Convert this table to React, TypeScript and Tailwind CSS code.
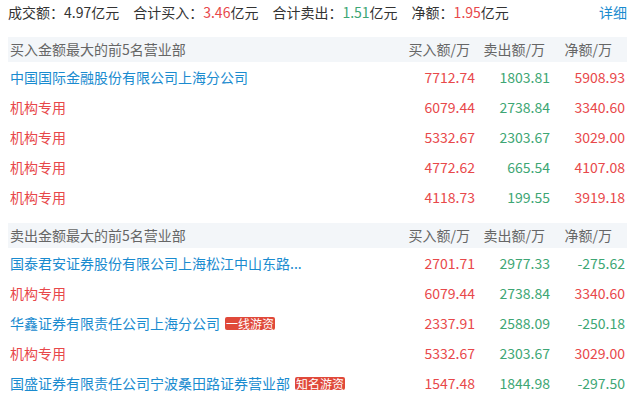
const RED = 'text-[#e8484a]'
const GREEN = 'text-[#3da674]'

interface Row {
  name: string
  inst?: boolean
  tag?: string
  buy: string
  sell: string
  net: string
}

const buyRows: Row[] = [
  { name: '中国国际金融股份有限公司上海分公司', buy: '7712.74', sell: '1803.81', net: '5908.93' },
  { name: '机构专用', inst: true, buy: '6079.44', sell: '2738.84', net: '3340.60' },
  { name: '机构专用', inst: true, buy: '5332.67', sell: '2303.67', net: '3029.00' },
  { name: '机构专用', inst: true, buy: '4772.62', sell: '665.54', net: '4107.08' },
  { name: '机构专用', inst: true, buy: '4118.73', sell: '199.55', net: '3919.18' },
]

const sellRows: Row[] = [
  { name: '国泰君安证券股份有限公司上海松江中山东路...', buy: '2701.71', sell: '2977.33', net: '-275.62' },
  { name: '机构专用', inst: true, buy: '6079.44', sell: '2738.84', net: '3340.60' },
  { name: '华鑫证券有限责任公司上海分公司', tag: '一线游资', buy: '2337.91', sell: '2588.09', net: '-250.18' },
  { name: '机构专用', inst: true, buy: '5332.67', sell: '2303.67', net: '3029.00' },
  { name: '国盛证券有限责任公司宁波桑田路证券营业部', tag: '知名游资', buy: '1547.48', sell: '1844.98', net: '-297.50' },
]

function Header({ title }: { title: string }) {
  return (
    <div className="flex h-[25px] items-center bg-[#f3f6f9] text-[#666] pr-[2px]">
      <div className="flex-1 pl-[2px]">{title}</div>
      <div className="w-[75px] text-right pr-[5px]">买入额/万</div>
      <div className="w-[75px] text-right pr-[5px]">卖出额/万</div>
      <div className="w-[75px] text-right pr-[13px]">净额/万</div>
    </div>
  )
}

function TableRow({ row }: { row: Row }) {
  const netColor = row.net.startsWith('-') ? GREEN : RED
  return (
    <div className="flex h-[30px] items-center pr-[2px]">
      <div className="flex flex-1 items-center pl-[2px] min-w-0">
        <span className={row.inst ? RED : 'text-[#1a8bcf]'}>{row.name}</span>
        {row.tag && (
          <span className="ml-[5px] h-[13px] rounded-[2px] bg-[#e0493a] px-[1px] text-[12px] leading-[13px] text-white">
            {row.tag}
          </span>
        )}
      </div>
      <div className={`w-[75px] text-right ${RED}`}>{row.buy}</div>
      <div className={`w-[75px] text-right ${GREEN}`}>{row.sell}</div>
      <div className={`w-[75px] text-right ${netColor}`}>{row.net}</div>
    </div>
  )
}

export default function App() {
  return (
    <div className="w-[634px] h-[400px] bg-white pl-2 pr-[7px] text-[14px] text-[#333] font-['Noto_Sans_CJK_SC','Noto_Sans',sans-serif] overflow-hidden">
      <div className="flex h-[24px] items-center gap-[14px] pl-[-1px]">
        <span>
          成交额：4.97亿元
        </span>
        <span>
          合计买入：<span className={RED}>3.46</span>亿元
        </span>
        <span>
          合计卖出：<span className={GREEN}>1.51</span>亿元
        </span>
        <span>
          净额：<span className={RED}>1.95</span>亿元
        </span>
        <span className="ml-auto text-[#1a8bcf]">详细</span>
      </div>

      <div className="mt-[13px]">
        <Header title="买入金额最大的前5名营业部" />
        {buyRows.map((r, i) => (
          <TableRow key={i} row={r} />
        ))}
      </div>

      <div className="mt-[11px]">
        <Header title="卖出金额最大的前5名营业部" />
        {sellRows.map((r, i) => (
          <TableRow key={i} row={r} />
        ))}
      </div>
    </div>
  )
}
